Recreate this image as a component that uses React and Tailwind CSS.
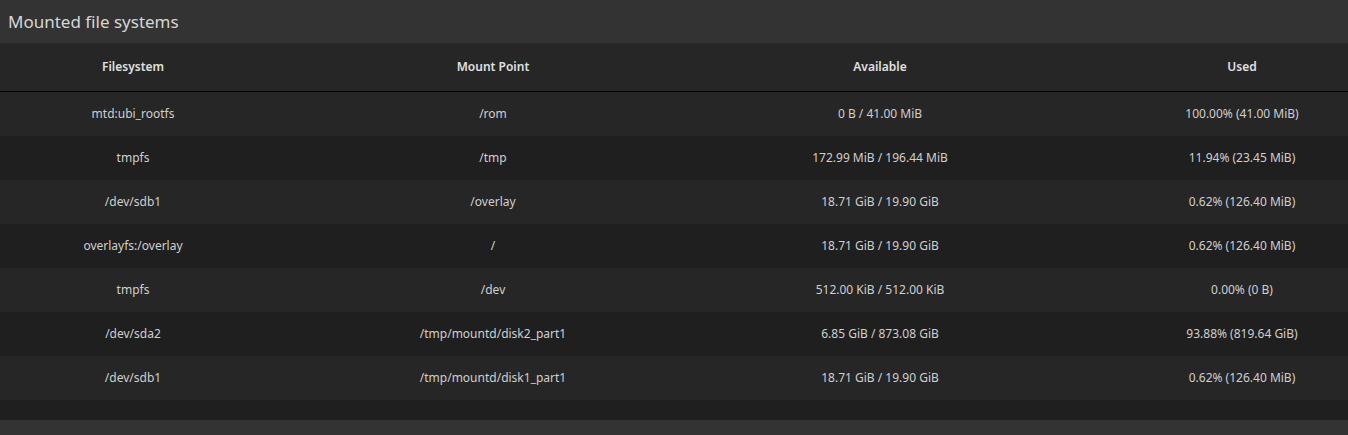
const rows = [
  ["mtd:ubi_rootfs", "/rom", "0 B / 41.00 MiB", "100.00% (41.00 MiB)"],
  ["tmpfs", "/tmp", "172.99 MiB / 196.44 MiB", "11.94% (23.45 MiB)"],
  ["/dev/sdb1", "/overlay", "18.71 GiB / 19.90 GiB", "0.62% (126.40 MiB)"],
  ["overlayfs:/overlay", "/", "18.71 GiB / 19.90 GiB", "0.62% (126.40 MiB)"],
  ["tmpfs", "/dev", "512.00 KiB / 512.00 KiB", "0.00% (0 B)"],
  ["/dev/sda2", "/tmp/mountd/disk2_part1", "6.85 GiB / 873.08 GiB", "93.88% (819.64 GiB)"],
  ["/dev/sdb1", "/tmp/mountd/disk1_part1", "18.71 GiB / 19.90 GiB", "0.62% (126.40 MiB)"],
];

const cols = "grid grid-cols-[266px_454px_320px_1fr]";

export default function App() {
  return (
    <div className="w-[1348px] h-[435px] bg-[#333333] font-['Inter',sans-serif] flex flex-col">
      <div className="h-[43px] flex items-center px-[8px] text-[17px] text-[#d6d6d6]">
        Mounted file systems
      </div>
      <div className="bg-[#1f1f1f] pb-[20px]">
        <div className={`${cols} h-[49px] items-center bg-[#262626] border-b border-black text-[12px] font-semibold text-[#e0e0e0] text-center`}>
          <div>Filesystem</div>
          <div>Mount Point</div>
          <div>Available</div>
          <div className="pl-[96px]">Used</div>
        </div>
        {rows.map((r, i) => (
          <div
            key={i}
            className={`${cols} h-[44px] items-center text-[12px] text-[#cfcfcf] text-center ${i % 2 === 0 ? "bg-[#262626]" : "bg-[#1f1f1f]"}`}
          >
            <div>{r[0]}</div>
            <div>{r[1]}</div>
            <div>{r[2]}</div>
            <div className="pl-[96px]">{r[3]}</div>
          </div>
        ))}
      </div>
    </div>
  );
}
